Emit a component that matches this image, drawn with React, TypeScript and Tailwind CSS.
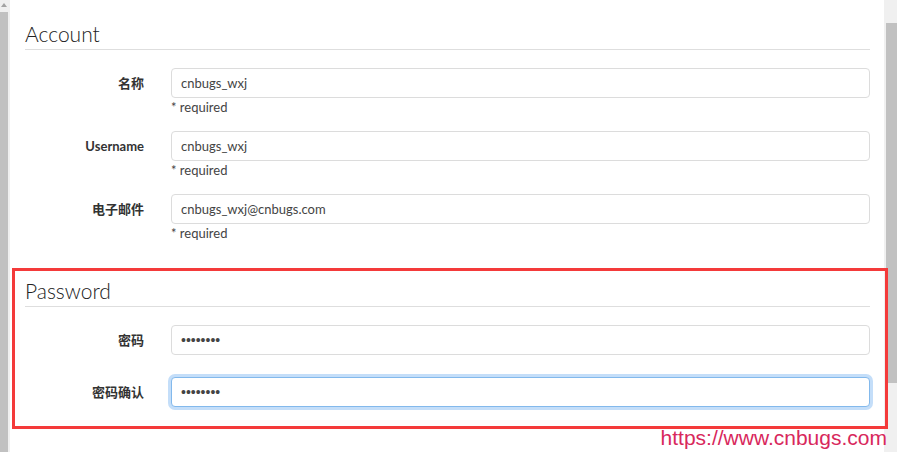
import React from "react";

const font = {
  fontFamily: '"Lato", "Noto Sans CJK SC", sans-serif',
};

function Field({
  label,
  value,
  type = "text",
  help,
  focused = false,
  className = "",
}: {
  label: string;
  value: string;
  type?: string;
  help?: string;
  focused?: boolean;
  className?: string;
}) {
  const isPassword = type === "password";
  return (
    <div className={`flex ${className}`}>
      <label className="w-[119px] shrink-0 pt-[6px] text-right text-[13px] font-bold leading-[18px] text-[#333]">
        {label}
      </label>
      <div className="ml-[27px] flex-1">
        <input
          type={type}
          value={value}
          readOnly
          className={`block h-[30px] w-full rounded-[4px] border bg-white px-[9px] text-[#444] outline-none ${
            isPassword ? "text-[14px]" : "text-[13px]"
          } ${
            focused
              ? "border-[#83b9ec] shadow-[0_0_0_3px_#c4def9]"
              : "border-[#dcdcdc]"
          }`}
          style={
            isPassword
              ? { fontFamily: '"Liberation Sans", Arial, sans-serif' }
              : font
          }
        />
        {help && (
          <div className="text-[13px] leading-[18px] text-[#444]">{help}</div>
        )}
      </div>
    </div>
  );
}

function Legend({ children }: { children: React.ReactNode }) {
  return (
    <div className="h-[31px] border-b border-[#dedede] text-[21px] font-light leading-[30px] text-[#222]">
      {children}
    </div>
  );
}

export default function App() {
  return (
    <div
      className="relative flex h-[452px] w-[897px] overflow-hidden bg-white"
      style={font}
    >
      {/* left frame scrollbar */}
      <div className="flex w-[10px] shrink-0 bg-[#f0f0f0]">
        <div className="flex w-[8px] flex-col">
          <div className="flex h-[12px] items-start justify-center pt-[3px]">
            <div className="h-0 w-0 border-x-[3px] border-b-[4px] border-x-transparent border-b-[#a3a3a3]" />
          </div>
          <div className="flex-1 bg-[#c1c1c1]" />
        </div>
      </div>

      {/* main content */}
      <div className="min-w-0 flex-1 pl-[15px] pr-[14px] pt-[19px]">
        <Legend>Account</Legend>
        <div className="flex flex-col gap-[15px] pt-[18px]">
          <Field label="名称" value="cnbugs_wxj" help="* required" />
          <Field label="Username" value="cnbugs_wxj" help="* required" />
          <Field
            label="电子邮件"
            value="cnbugs_wxj@cnbugs.com"
            help="* required"
          />
        </div>

        <div className="relative z-10 ml-[-13px] mr-[-18px] mt-[26px] border-[3px] border-[#f43a3a] pb-[19px] pl-[10px] pr-[15px] pt-[5px]">
          <Legend>Password</Legend>
          <div className="flex flex-col gap-[22px] pt-[18px]">
            <Field label="密码" value="abcdefgh" type="password" />
            <Field label="密码确认" value="abcdefgh" type="password" focused />
          </div>
        </div>
      </div>

      {/* right scrollbar */}
      <div className="w-[13px] shrink-0 bg-[#f0f0f0] pl-[2px] pt-[23px]">
        <div className="h-[360px] bg-[#c1c1c1]" />
      </div>

      {/* watermark */}
      <div
        className="absolute bottom-[4px] right-[10px] z-20 text-[21px] leading-none text-[#d8285c]"
        style={{ fontFamily: '"Liberation Sans", Arial, sans-serif' }}
      >
        https://www.cnbugs.com
      </div>
    </div>
  );
}
